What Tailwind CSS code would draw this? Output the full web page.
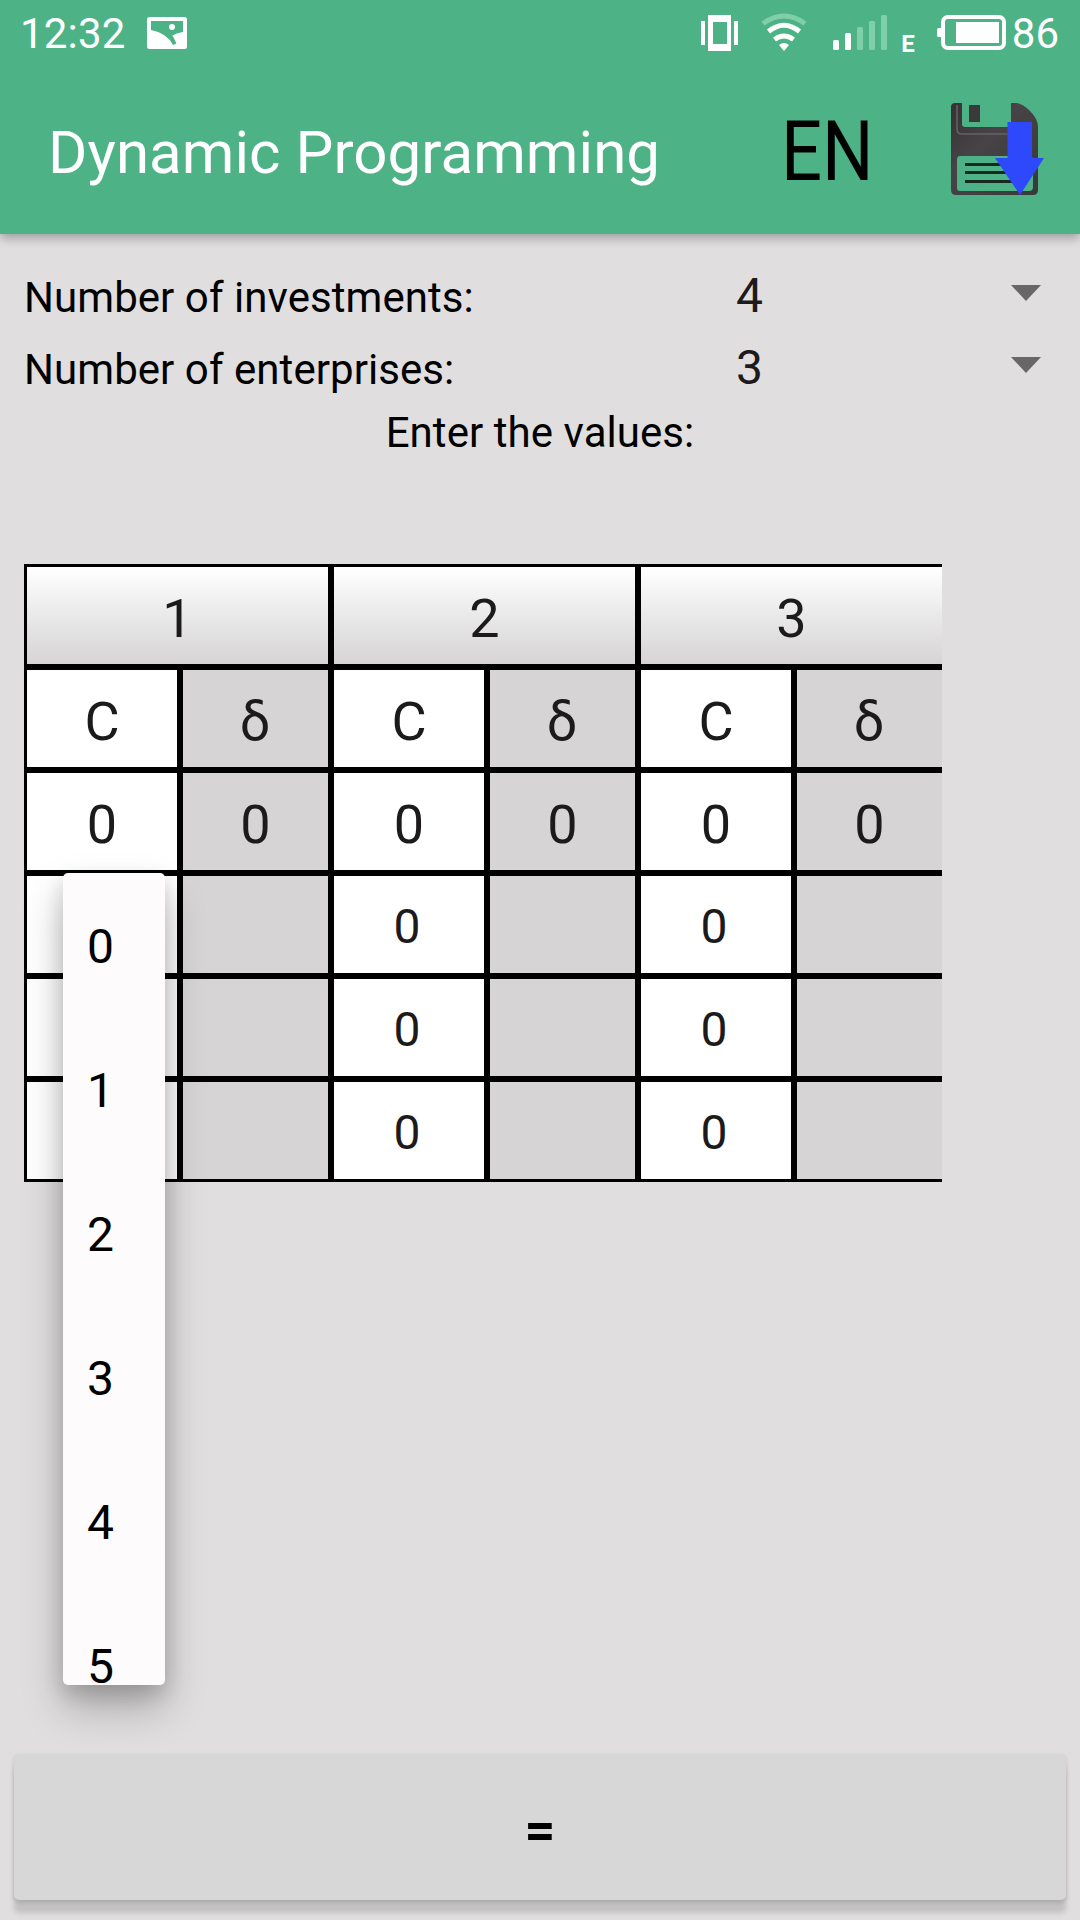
<!doctype html>
<html lang="en">
  <head>
    <meta charset="UTF-8" />
    <meta name="viewport" content="width=device-width, initial-scale=1.0" />
    <title>Dynamic Programming</title>
    <script src="https://cdn.jsdelivr.net/npm/@tailwindcss/browser@4"></script>
  </head>
  <body class="w-[1080px] h-[1920px] overflow-hidden bg-[#e0dede] font-['Roboto','Noto_Sans',sans-serif] text-black">
    <div id="app" class="relative flex flex-col w-full h-full">
      <header class="h-[234px] shrink-0 bg-[#4db286] text-white shadow-[0_4px_10px_rgba(0,0,0,0.3)]">
        <!-- status bar -->
        <div class="h-[66px] flex items-center pl-5 pr-[21px]">
          <span class="text-[42px] leading-[64px] pt-[2px] tracking-[0.2px]">12:32</span>
          <svg class="ml-[21px]" width="40" height="32" viewBox="0 0 40 32">
            <rect width="40" height="32" rx="2.5" fill="#fff" />
            <path d="M4 4H36V15Q29 16 25 19L28 27L26 28Q20 16 4 13Z" fill="#4db286" />
            <path d="M25 19.5L28.5 27" stroke="#4db286" stroke-width="2" />
            <circle cx="25" cy="10" r="3" fill="#fff" />
          </svg>
          <div class="ml-auto flex items-center">
            <svg width="38" height="36" viewBox="0 0 38 36" fill="#fff">
              <path fill-rule="evenodd" d="M7 0H30V36H7ZM12 7V29H26V7Z" />
              <rect x="0" y="6" width="4" height="24" />
              <rect x="33" y="6" width="4" height="24" />
            </svg>
            <svg class="ml-[22px]" width="46" height="40" viewBox="0 0 46 40" fill="none" stroke="#fff" stroke-width="5">
              <path d="M2 10.5Q23 -4.500 44 10.500" stroke="#7fcfa9" />
              <path d="M7.500 18.500Q23 6 38.500 18.500" />
              <path d="M13.500 26.500Q23 19.500 32.500 26.500" />
              <path d="M18 32Q23 28 28 32L23 38Z" fill="#fff" stroke="none" />
            </svg>
            <svg class="ml-[26px]" width="56" height="36" viewBox="0 0 56 36">
              <rect x="0" y="25" width="6" height="10" rx="1.500" fill="#fff" />
              <rect x="12" y="18" width="6" height="17" rx="1.500" fill="#fff" />
              <rect x="24" y="12" width="6" height="23" rx="1.500" fill="#7fcfa9" />
              <rect x="36" y="6" width="6" height="29" rx="1.500" fill="#7fcfa9" />
              <rect x="48" y="0" width="6" height="35" rx="1.500" fill="#7fcfa9" />
            </svg>
            <span class="ml-[12px] mt-[21px] text-[24px] leading-6 font-bold">E</span>
            <svg class="ml-[22px]" width="70" height="36" viewBox="0 0 70 36">
              <rect x="6" y="2" width="61" height="31" rx="5" fill="none" stroke="#fff" stroke-width="4" />
              <rect x="0" y="13" width="5" height="9" rx="1.500" fill="#fff" />
              <rect x="19" y="7" width="43" height="21" fill="#fff" />
            </svg>
            <span class="ml-[5px] text-[42px] leading-[64px] pt-[2px]">86</span>
          </div>
        </div>
        <!-- toolbar -->
        <div class="h-[168px] flex items-center pl-12">
          <h1 class="w-[733px] text-[60px] leading-[162px] pt-[6px] tracking-[0.06px]">Dynamic Programming</h1>
          <span class="w-[169px] text-[84px] leading-[164px] pt-[4px] text-black origin-left scale-x-[0.86]">EN</span>
          <svg width="94" height="94" viewBox="0 0 94 94">
            <defs>
              <linearGradient id="disk" x1="0" y1="0" x2="1" y2="1">
                <stop offset="0" stop-color="#353234" />
                <stop offset="0.4" stop-color="#474346" />
                <stop offset="1" stop-color="#393938" />
              </linearGradient>
            </defs>
            <path fill="url(#disk)" fill-rule="evenodd" d="M5 0H12V21Q12 24 15 24H61V0H67Q73 1 80 8Q88 16 88 24V87Q88 92 83 92H6Q1 92 1 87V4Q1 0 5 0ZM10 53Q7 53 7 57V85Q7 88 10 88H79Q83 88 83 84V57Q83 53 79 53Z" />
            <path d="M7 2V26Q7 31 12 31H61" fill="none" stroke="#666264" stroke-width="1.500" />
            <rect x="19" y="2" width="11" height="17" fill="#3b3a3a" />
            <path d="M15 61.500H64M15 69.500H64M15 78.500H64" stroke="#17291f" stroke-width="3" />
            <path d="M57.500 19H82V55H94L70 92L45 55H57.500Z" fill="#2d49fb" />
          </svg>
        </div>
      </header>

      <main class="flex flex-col">
        <section class="pt-[27px] text-[42px] tracking-[0.06px]">
          <div class="h-[72px] flex items-center pl-6 pr-[39px]">
            <span class="w-[712px]">Number of investments:</span>
            <span class="pb-[2px] text-[48px] text-[#1c1a1b]">4</span>
            <svg class="ml-auto mb-2" width="30" height="16" viewBox="0 0 30 16" fill="#686667"><path d="M0 0H30L15 16Z" /></svg>
          </div>
          <div class="h-[72px] flex items-center pl-6 pr-[39px]">
            <span class="w-[712px]">Number of enterprises:</span>
            <span class="pb-[2px] text-[48px] text-[#1c1a1b]">3</span>
            <svg class="ml-auto mb-2" width="30" height="16" viewBox="0 0 30 16" fill="#686667"><path d="M0 0H30L15 16Z" /></svg>
          </div>
          <p class="h-[56px] leading-[56px] text-center">Enter the values:</p>
        </section>

        <!-- values table, its right edge is cut by the scroll view -->
        <section class="mt-[103px] ml-6 w-[918px] overflow-hidden text-[54px] text-[#1c1a1b]">
          <div class="w-[921px] grid grid-cols-[156px_151px_156px_151px_156px_151px] auto-rows-[103px] *:border-3 *:border-black *:flex *:items-center *:justify-center *:pt-[5px]">
            <div class="col-span-2 bg-linear-to-b from-white to-[#d6d4d5]">1</div>
            <div class="col-span-2 bg-linear-to-b from-white to-[#d6d4d5]">2</div>
            <div class="col-span-2 bg-linear-to-b from-white to-[#d6d4d5]">3</div>

            <div class="bg-white">C</div>
            <div class="bg-[#d6d4d5] pr-px">δ</div>
            <div class="bg-white">C</div>
            <div class="bg-[#d6d4d5] pr-px">δ</div>
            <div class="bg-white">C</div>
            <div class="bg-[#d6d4d5] pr-px">δ</div>

            <div class="bg-white">0</div>
            <div class="bg-[#d6d4d5]">0</div>
            <div class="bg-white">0</div>
            <div class="bg-[#d6d4d5]">0</div>
            <div class="bg-white">0</div>
            <div class="bg-[#d6d4d5]">0</div>

            <div class="bg-white"></div>
            <div class="bg-[#d6d4d5]"></div>
            <div class="bg-white text-[48px] pr-1">0</div>
            <div class="bg-[#d6d4d5]"></div>
            <div class="bg-white text-[48px] pr-1">0</div>
            <div class="bg-[#d6d4d5]"></div>

            <div class="bg-white"></div>
            <div class="bg-[#d6d4d5]"></div>
            <div class="bg-white text-[48px] pr-1">0</div>
            <div class="bg-[#d6d4d5]"></div>
            <div class="bg-white text-[48px] pr-1">0</div>
            <div class="bg-[#d6d4d5]"></div>

            <div class="bg-white"></div>
            <div class="bg-[#d6d4d5]"></div>
            <div class="bg-white text-[48px] pr-1">0</div>
            <div class="bg-[#d6d4d5]"></div>
            <div class="bg-white text-[48px] pr-1">0</div>
            <div class="bg-[#d6d4d5]"></div>
          </div>
        </section>
      </main>

      <footer class="mt-auto px-[14px] pb-5">
        <button class="block w-full h-[146px] rounded-[5px] bg-[#d6d7d6] text-[54px] font-bold pt-[4px] shadow-[0_13px_5px_rgba(0,0,0,0.13),0_2px_4px_rgba(0,0,0,0.14)]">=</button>
      </footer>

      <!-- opened spinner -->
      <div class="absolute left-[63px] top-[873px] w-[102px] h-[812px] rounded-[5px] bg-[#fdfbfc] shadow-[0_22px_40px_rgba(0,0,0,0.26),0_8px_20px_rgba(0,0,0,0.14)]">
        <ul class="h-full overflow-hidden rounded-[5px] pt-[2px] pl-6 text-[48px] leading-[144px]">
          <li>0</li>
          <li>1</li>
          <li>2</li>
          <li>3</li>
          <li>4</li>
          <li>5</li>
        </ul>
      </div>
    </div>
  </body>
</html>
